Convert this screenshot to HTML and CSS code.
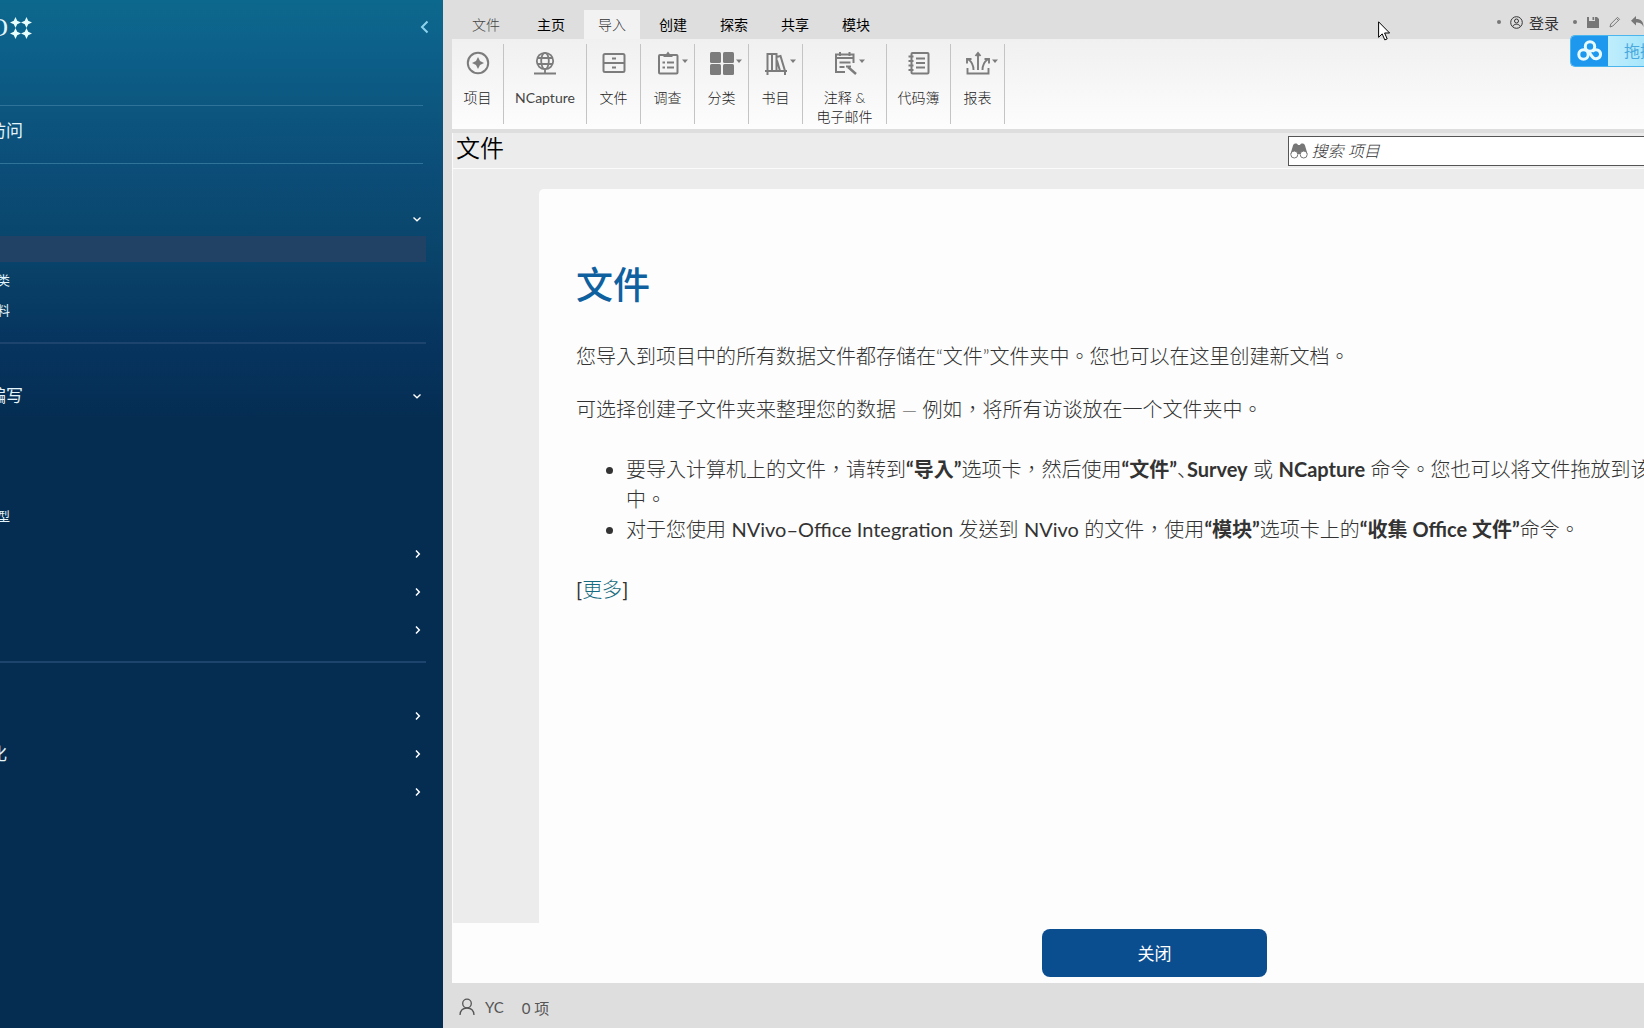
FILE: index.html
```html
<!DOCTYPE html>
<html lang="zh-CN">
<head>
<meta charset="utf-8">
<meta name="viewport" content="width=device-width, initial-scale=1">
<title>NVivo</title>
<link rel="stylesheet" href="styles.css">
</head>
<body>
<svg class="sprite" aria-hidden="true">
  <symbol id="down" viewBox="0 0 10 10"><path d="M1.500 3.500 5 6.800 8.500 3.500" fill="none" stroke="currentColor" stroke-width="1.400"/></symbol>
  <symbol id="right" viewBox="0 0 10 10"><path d="M4 1.500 7.300 5 4 8.500" fill="none" stroke="currentColor" stroke-width="1.500"/></symbol>
  <symbol id="caret" viewBox="0 0 8 5"><path d="M1 .5h6L4 4z" fill="currentColor"/></symbol>
</svg>
<div class="app">
  <aside class="sidebar">
    <header class="brand">
      <span class="brand-name">O</span>
      <svg class="brand-mark" width="22" height="22" viewBox="0 0 22 22" fill="currentColor" aria-hidden="true">
        <path id="star" d="M5.500 0 7.200 3.800 11 5.500 7.200 7.200 5.500 11 3.800 7.200 0 5.500 3.800 3.800z"/>
        <use href="#star" x="11"/><use href="#star" y="11"/><use href="#star" x="11" y="11"/>
      </svg>
      <button class="collapse" aria-label="Collapse"><svg width="10" height="14" viewBox="0 0 10 14"><path d="M7.500 1.500 2 7l5.500 5.500" fill="none" stroke="currentColor" stroke-width="2"/></svg></button>
    </header>
    <a class="quick" href="#"><span class="label">访问</span></a>
    <nav>
      <section class="group first">
        <button class="row short" aria-label="Data"><svg class="chev"><use href="#down"/></svg></button>
        <div class="selected"></div>
        <a class="sub" href="#"><span class="label">类</span></a>
        <a class="sub" href="#"><span class="label">料</span></a>
      </section>
      <section class="group second">
        <button class="row"><span class="label">编写</span><svg class="chev"><use href="#down"/></svg></button>
        <div class="blank"></div>
        <a class="sub" href="#"><span class="label">型</span></a>
        <button class="row" aria-label="Cases"><svg class="chev"><use href="#right"/></svg></button>
        <button class="row" aria-label="Notes"><svg class="chev"><use href="#right"/></svg></button>
        <button class="row" aria-label="Sets"><svg class="chev"><use href="#right"/></svg></button>
      </section>
      <section class="group third">
        <button class="row" aria-label="Queries"><svg class="chev"><use href="#right"/></svg></button>
        <button class="row"><span class="label tight">化</span><svg class="chev"><use href="#right"/></svg></button>
        <button class="row" aria-label="Reports"><svg class="chev"><use href="#right"/></svg></button>
      </section>
    </nav>
  </aside>

  <div class="work">
    <header class="topbar">
      <nav class="tabs">
        <button class="tab file">文件</button>
        <button class="tab">主页</button>
        <button class="tab active">导入</button>
        <button class="tab">创建</button>
        <button class="tab">探索</button>
        <button class="tab">共享</button>
        <button class="tab">模块</button>
      </nav>
      <div class="account">
        <i class="dot"></i>
        <button class="login">
          <svg width="13" height="13" viewBox="0 0 13 13" fill="none" stroke="currentColor"><circle cx="6.500" cy="6.500" r="5.800"/><circle cx="6.500" cy="5" r="2"/><path d="M2.800 10.500c.8-3 6.600-3 7.400 0"/></svg>
          登录
        </button>
        <i class="dot"></i>
        <button class="tool" aria-label="Save"><svg width="12" height="12" viewBox="0 0 12 12"><path d="M0 1h2v4h6V1h2l2 2v9H0z M5.500 1h1.700v3H5.500z" fill="currentColor"/></svg></button>
        <button class="tool" aria-label="Edit"><svg width="12" height="12" viewBox="0 0 12 12"><path d="m1 11 .8-3L8.500 1.300l2 2L3.800 10zM7.500 2.500l2 2" fill="none" stroke="currentColor"/></svg></button>
        <button class="tool" aria-label="Undo"><svg width="13" height="12" viewBox="0 0 13 12"><path d="M5 0v3c5 0 7.500 2.500 7.500 8C11 7.500 9 6.500 5 6.500v3L0 4.700z" fill="currentColor"/></svg></button>
      </div>
    </header>

    <div class="ribbon">
      <button class="cmd w51"><span class="glyph"><svg width="24" height="24" viewBox="0 0 24 24"><circle cx="12" cy="12" r="10.200" fill="none" stroke="currentColor" stroke-width="2"/><path d="m12 6 2 4 4 2-4 2-2 4-2-4-4-2 4-2z" fill="currentColor"/></svg></span><span>项目</span></button>
      <button class="cmd w83"><span class="glyph"><svg width="24" height="24" viewBox="0 0 24 24" fill="none" stroke="currentColor" stroke-width="1.800"><circle cx="12" cy="10" r="8.200"/><ellipse cx="12" cy="10" rx="3.800" ry="8.200"/><path d="M4.500 7h15M4.500 13h15M12 18v5M1 22.500h22"/></svg></span><span class="latin">NCapture</span></button>
      <button class="cmd w54"><span class="glyph"><svg width="24" height="24" viewBox="0 0 24 24" fill="none" stroke="currentColor" stroke-width="2"><rect x="1.500" y="3" width="21" height="18" rx="1.500"/><path d="M1.500 12h21M10 7.500h4M10 16.500h4"/></svg></span><span>文件</span></button>
      <button class="cmd w54"><span class="glyph"><svg width="24" height="24" viewBox="0 0 24 24" fill="none" stroke="currentColor" stroke-width="2"><rect x="3" y="4" width="18.500" height="18.500" rx="1"/><path d="M7.500 3h2.700l1.800-2.500 1.800 2.500h2.700v3h-9z" fill="currentColor" stroke="none"/><path d="M6.500 11.500h2.500M6.500 16.500h2.500M11 11.500h7M11 16.500h7"/></svg><svg class="caret"><use href="#caret"/></svg></span><span>调查</span></button>
      <button class="cmd w54"><span class="glyph"><svg width="24" height="24" viewBox="0 0 24 24" fill="currentColor"><rect x="0" y="1" width="11" height="11" rx="1.500"/><rect x="13" y="1" width="11" height="11" rx="1.500"/><rect x="0" y="13" width="11" height="11" rx="1.500"/><rect x="13" y="13" width="11" height="11" rx="1.500"/></svg><svg class="caret"><use href="#caret"/></svg></span><span>分类</span></button>
      <button class="cmd w54"><span class="glyph"><svg width="24" height="24" viewBox="0 0 24 24" fill="none" stroke="currentColor" stroke-width="2"><path d="M1 20h22M3.500 24V3h9v17M8 3v17M12.500 6l4-1L21 20v4M13 9.500 16 20"/></svg><svg class="caret"><use href="#caret"/></svg></span><span>书目</span></button>
      <button class="cmd w84"><span class="glyph"><svg width="24" height="24" viewBox="0 0 24 24" fill="none" stroke="currentColor" stroke-width="2"><path d="M12 21H3V3.500h17.500V12M3 7h18M7 1v4M16.500 1v4M6.500 11.500h11M6.500 16h5"/><path d="m15 16 8 7" stroke-width="2.400"/><path d="M13 15.500h5"/></svg><svg class="caret"><use href="#caret"/></svg></span><span>注释 &amp;<br>电子邮件</span></button>
      <button class="cmd w64"><span class="glyph"><svg width="24" height="24" viewBox="0 0 24 24" fill="none" stroke="currentColor" stroke-width="2"><rect x="4.500" y="2" width="17" height="20.500" rx="1"/><path d="M9 7.500h9M9 12h9M9 16.500h9" stroke-width="2.200"/><path d="M1.500 5.500h5M1.500 10h5M1.500 14.500h5M1.500 19h5" stroke-width="1.800"/></svg></span><span>代码簿</span></button>
      <button class="cmd w54"><span class="glyph"><svg width="24" height="24" viewBox="0 0 24 24" fill="none" stroke="currentColor" stroke-width="1.900"><path d="M1.500 17v5.500h21V17M12 19V3M9.500 5 12 2l2.500 3M7.500 19c0-5-1.500-8-5-10.500M1 12.500V8h4.500M16.500 19c0-5 1.500-8 5-10.500M23 12.500V8h-4.500"/></svg><svg class="caret"><use href="#caret"/></svg></span><span>报表</span></button>
    </div>

    <div class="titlebar">
      <h2 class="title">文件</h2>
      <label class="search">
        <svg width="18" height="16" viewBox="0 0 18 16"><path d="M3 2.500C4 0 7 0 8 2h2c1-2 4-2 5 .5L17.500 11H.5z" fill="#777"/><circle cx="4.300" cy="11.500" r="3.500" fill="#fff" stroke="#777"/><circle cx="13.700" cy="11.500" r="3.500" fill="#fff" stroke="#777"/></svg>
        <input type="text" placeholder="搜索 项目" aria-label="搜索 项目">
      </label>
    </div>

    <main class="canvas">
      <article class="card" lang="zh-TW">
        <h1>文件</h1>
        <p>您导入到项目中的所有数据文件都存储在“文件”文件夹中。您也可以在这里创建新文档。</p>
        <p>可选择创建子文件夹来整理您的数据 — 例如，将所有访谈放在一个文件夹中。</p>
        <ul>
          <li>要导入计算机上的文件，请转到<b>“导入”</b>选项卡，然后使用<b>“文件”</b><span class="half" lang="zh-CN">、</span><b>Survey</b> 或 <b>NCapture</b> 命令。您也可以将文件拖放到该<br>中。</li>
          <li>对于您使用 <span class="latin-run">NVivo–Office Integration</span> 发送到 <span class="latin-run">NVivo</span> 的文件，使用<b>“模块”</b>选项卡上的<b>“收集 Office 文件”</b>命令。</li>
        </ul>
        <p class="more"><span class="latin-run">[</span><a href="#">更多</a><span class="latin-run">]</span></p>
      </article>
    </main>
    <div class="actions"><button class="close">关闭</button></div>

    <footer class="status">
      <svg width="16" height="18" viewBox="0 0 16 18" fill="none" stroke="currentColor" stroke-width="1.300"><circle cx="8" cy="5.500" r="4.300"/><path d="M1 17c.3-4.500 2.500-7 7-7s6.700 2.500 7 7"/></svg>
      <span>YC</span><span>0 项</span>
    </footer>
  </div>

  <div class="upload">
    <span class="upload-icon"><svg width="26" height="22" viewBox="0 0 26 22" fill="none" stroke="#e9faff" stroke-width="3"><circle cx="13" cy="6.500" r="4.700"/><circle cx="6.500" cy="14.500" r="4.700"/><path d="M15.500 11.500c3-3.500 8.500-1 8 3.200-.5 4-5.500 5.500-8 2.300L11 11"/></svg></span>
    <span class="upload-text">拖拽</span>
  </div>
  <svg class="pointer" width="13" height="20" viewBox="0 0 13 20" aria-hidden="true"><path d="M.6.800v15.500l3.600-3.400 2.600 6 2.400-1-2.600-5.900h5z" fill="#fff" stroke="#000"/></svg>
</div>
</body>
</html>
```
FILE: styles.css
```css
* { box-sizing: border-box; }

body {
  margin: 0;
  font-family: Lato, "Noto Sans CJK SC", sans-serif;
  font-size: 14px;
  color: #333;
}

button {
  padding: 0;
  border: 0;
  background: none;
  color: inherit;
  font: inherit;
}

a { color: inherit; text-decoration: none; }
svg { flex: none; }
.sprite { position: absolute; width: 0; height: 0; }

.app {
  position: relative;
  display: grid;
  grid-template-columns: 443px minmax(0, 1fr);
  min-height: 100vh;
  overflow: hidden;
  background: #dedede;
}

/* Sidebar */
.sidebar {
  padding-right: 17px;
  color: #e4f5fb;
  background: linear-gradient(#0d688d 0, #0c608a 50px, #0c567f 110px, #0b4d78 170px, #0a486f 220px, #083e66 290px, #06345f 345px, #052d52 420px);
}

.brand {
  display: flex;
  align-items: flex-start;
  height: 105px;
  padding-top: 17px;
}

.brand-name {
  display: flex;
  justify-content: flex-end;
  width: 8px;
  margin-right: 2px;
  overflow: hidden;
  font: 26px/22px "Liberation Serif", serif;
}

.brand-mark { color: #e9ffff; }

.collapse {
  display: flex;
  margin-left: auto;
  padding-top: 3px;
  color: #8ed2ec;
}

.collapse svg { margin-right: -4px; }

.quick {
  display: flex;
  align-items: center;
  height: 59px;
  margin-right: 3px;
  padding-bottom: 8px;
  border: solid #2f7398;
  border-width: 1px 0;
}

.label {
  display: flex;
  justify-content: flex-end;
  width: 23px;
  overflow: hidden;
  font-size: 17px;
  line-height: 26px;
  white-space: nowrap;
}

.label.tight { width: 7px; }
.sub .label { width: 10px; font-size: 13px; }

.group { border-bottom: 2px solid #1c446d; }
.first { padding: 36px 0 17px; }
.second { padding: 33px 0 12px; }
.third { padding-top: 34px; border: 0; }

.row {
  display: flex;
  align-items: center;
  width: 100%;
  height: 38px;
  padding-right: 4px;
}

.row.short { height: 36px; padding-top: 2px; }
.chev { width: 10px; height: 10px; margin-left: auto; color: #fff; }

.selected {
  height: 26px;
  margin-bottom: 3px;
  background: #214265;
}

.sub { display: flex; align-items: center; height: 30px; }
.blank { height: 86px; }
.blank + .sub { margin-bottom: 4px; }

/* Work area */
.work {
  display: flex;
  flex-direction: column;
  padding-left: 9px;
}

.topbar {
  display: flex;
  align-items: flex-end;
  justify-content: space-between;
  height: 39px;
  padding-left: 6px;
}

.tabs { display: flex; gap: 5px; }

.tab {
  width: 56px;
  height: 29px;
  padding-bottom: 2px;
  color: #000;
}

.tab.file { margin-right: 4px; color: #444; font-weight: 300; }
.tab.active { background: #f2f2f2; color: #333; font-weight: 300; }

.account {
  display: flex;
  align-items: center;
  height: 32px;
  padding-bottom: 2px;
}

.dot { width: 4px; height: 4px; border-radius: 2px; background: #777; }

.login {
  display: flex;
  align-items: center;
  gap: 6px;
  margin: 0 14px 0 9px;
  font-size: 15px;
}

.tool { display: flex; margin-left: 10px; color: #777; }

.ribbon {
  display: flex;
  align-items: center;
  height: 90px;
  margin-bottom: 4px;
  background: linear-gradient(#f0f0f0, #fdfdfd);
}

.cmd {
  display: flex;
  flex-direction: column;
  align-items: center;
  gap: 13px;
  height: 80px;
  padding-top: 7px;
  border-right: 1px solid #c4c4c4;
  color: #222;
  font-weight: 300;
  line-height: 19px;
}

.w51 { width: 52px; }
.w83 { width: 83px; }
.w54 { width: 54px; }
.w84 { width: 84px; }
.w64 { width: 64px; }
.latin { color: #444; font-weight: 400; }

.glyph { position: relative; display: flex; color: #7c7c7c; }
.caret { position: absolute; left: 25px; top: 8px; width: 8px; height: 5px; }

.titlebar {
  display: flex;
  align-items: center;
  justify-content: space-between;
  height: 36px;
  padding-left: 3px;
  border: solid #fbfbfb;
  border-width: 0 0 1px 1px;
  background: #ececec;
}

.title {
  margin: 0;
  padding-bottom: 5px;
  color: #000;
  font-size: 24px;
  font-weight: 350;
  line-height: 30px;
}

.search {
  display: flex;
  align-items: center;
  gap: 4px;
  width: 30%;
  height: 30px;
  padding-left: 1px;
  border: 1px solid #555;
  border-right: 0;
  background: #fff;
}

.search input {
  flex: 1;
  min-width: 0;
  padding: 0;
  border: 0;
  outline: 0;
  background: none;
  font: italic 300 16px/24px Lato, "Noto Sans CJK SC", sans-serif;
}

.search input::placeholder { color: #333; opacity: 1; }

.canvas {
  flex: 1;
  display: flex;
  padding: 20px 0 0 86px;
  border-left: 1px solid #fbfbfb;
  background: #ececec;
}

.card {
  flex: 1;
  min-width: 0;
  padding: 66px 0 0 37px;
  border-top-left-radius: 5px;
  background: #fdfdfd;
  color: #333;
  font-family: Lato, "Noto Sans CJK TC", sans-serif;
  font-size: 20px;
  line-height: 30px;
  white-space: nowrap;
}

.card h1 {
  margin: 0 0 26px;
  color: #0f609f;
  font-size: 37px;
  font-weight: 500;
  line-height: 60px;
}

.card p { margin: 0 0 23px; font-weight: 300; }
.card ul { margin: 30px 0; padding-left: 50px; font-weight: 300; }
.card b { font-weight: 700; }
.card a { color: #176b80; }
.latin-run { font-weight: 400; }

.half {
  font-family: "Noto Sans CJK SC", sans-serif;
  font-feature-settings: "halt";
}

.actions {
  display: flex;
  justify-content: center;
  width: calc(100% + 213px);
  height: 60px;
  padding-top: 6px;
  background: #fdfdfd;
}

.close {
  width: 225px;
  height: 48px;
  padding-bottom: 2px;
  border-radius: 8px;
  background: #0b4e90;
  color: #fff;
  font-size: 17px;
}

.status {
  display: flex;
  align-items: center;
  height: 45px;
  padding: 3px 0 0 7px;
  color: #555;
  font-size: 15px;
}

.status span { margin-left: 10px; }
.status span + span { margin-left: 18px; }

/* Floating upload widget */
.upload {
  position: absolute;
  top: 35px;
  right: 0;
  display: flex;
  width: 74px;
  height: 32px;
  overflow: hidden;
  border: 1px solid #4bb6ee;
  border-right: 0;
  border-radius: 5px 0 0 5px;
  background: linear-gradient(90deg, #d6f5fe, #a8e6fb);
}

.upload-icon {
  display: grid;
  flex: none;
  place-items: center;
  width: 37px;
  background: #1e98ee;
}

.upload-text {
  padding-left: 16px;
  color: #4aa9dc;
  font-size: 16px;
  line-height: 30px;
  white-space: nowrap;
}

.pointer { position: absolute; top: 21px; left: 1378px; }
```
